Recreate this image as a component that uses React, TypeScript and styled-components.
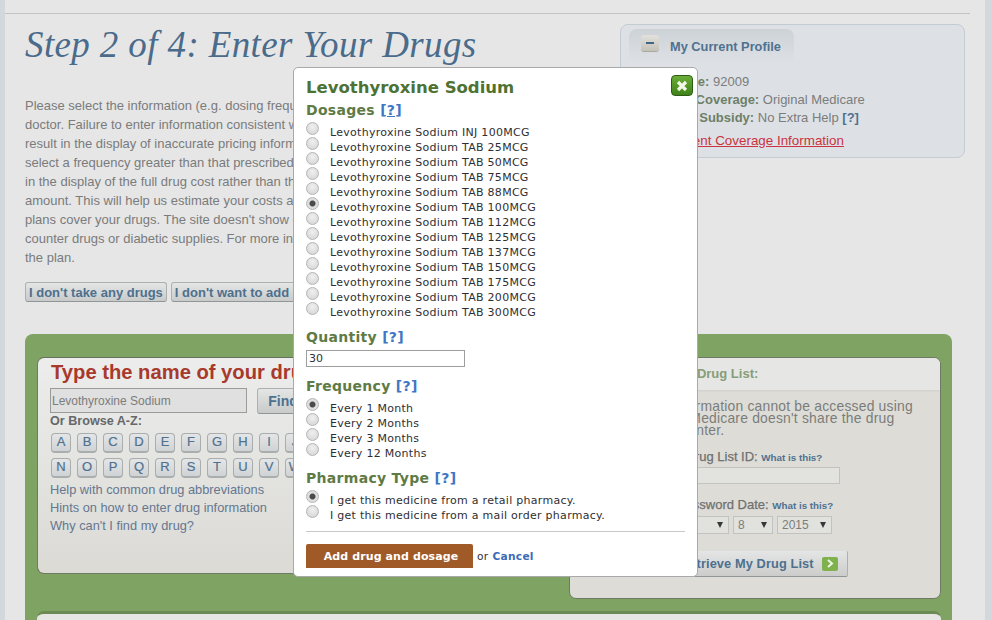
import React from 'react';
import styled, { createGlobalStyle } from 'styled-components';

const GlobalStyle = createGlobalStyle`
    html, body {
        margin: 0;
        padding: 0;
        height: 620px;
        overflow: hidden;
        background: #d3d8dd;
        font-family: "Liberation Sans", Arial, sans-serif;
    }
`;

const Page = styled.div`
    position: relative;
    width: 992px;
    height: 620px;
    overflow: hidden;
`;

const Sheet = styled.div`
    margin-left: 5px;
    width: 980px;
    height: 620px;
    background: #e6e6e7;
    overflow: hidden;
`;

const TopRule = styled.div`
    width: 965px;
    height: 13px;
    border-bottom: 1px solid #c2c3c3;
`;

const Intro = styled.div`
    display: flex;
    justify-content: space-between;
    padding: 10px 20px 0 20px;
    height: 310px;
`;

const IntroText = styled.div`
    width: 560px;
`;

const Title = styled.h1`
    margin: 0 0 30px;
    font: italic 400 37px/42px "Liberation Serif", Georgia, serif;
    color: #4a6b8a;
    letter-spacing: 0.38px;
`;

const Paragraph = styled.p`
    margin: 0 0 15px;
    width: 560px;
    height: 171px;
    font-size: 13px;
    line-height: 19px;
    color: #7a7b7b;
    white-space: nowrap;
`;

const ActionRow = styled.div`
    display: flex;
    gap: 4px;
`;

const GrayButton = styled.button`
    height: 20px;
    padding: 0 3px;
    border: 1px solid #adb0b1;
    border-bottom-color: #929596;
    border-radius: 3px;
    background: linear-gradient(#e4e5e5, #c9cbcb);
    color: #4d708e;
    font: 700 13px "Liberation Sans", Arial, sans-serif;
    white-space: nowrap;
`;

const ProfileBox = styled.aside`
    width: 345px;
    height: 134px;
    box-sizing: border-box;
    padding: 4px 8px;
    border: 1px solid #c3ccd3;
    border-radius: 8px;
    background: #dde1e5;
`;

const ProfileTab = styled.div`
    display: flex;
    align-items: center;
    gap: 11px;
    width: 165px;
    height: 34px;
    box-sizing: border-box;
    padding-left: 12px;
    border-radius: 8px 8px 0 0;
    background: linear-gradient(#cdd2d6, #dde1e5);
`;

const MinusButton = styled.span`
    display: flex;
    align-items: center;
    justify-content: center;
    width: 18px;
    height: 16px;
    margin-bottom: 6px;
    border-radius: 3px;
    background: linear-gradient(#e2e1dc, #c4c2b8);
    box-shadow: 0 1px 0 #aaa99f;

    &::before {
        content: '';
        width: 8px;
        height: 2px;
        background: #3f6484;
    }
`;

const ProfileTitle = styled.span`
    font-size: 12.8px;
    font-weight: 700;
    color: #4f7190;
`;

const ProfileLines = styled.div`
    padding: 10px 0 0 11px;
    font-size: 13px;
    line-height: 18px;
    color: #7b7c7c;
`;

const ProfileLabel = styled.b`
    color: #6e7f68;
`;

const HelpLink = styled.b`
    color: #4f7190;
`;

const CoverageLink = styled.a`
    display: block;
    margin-top: 5px;
    color: #c8343f;
    font-size: 13.4px;
    font-weight: 400;
    text-decoration: underline;
`;

const GreenPanel = styled.section`
    width: 927px;
    height: 300px;
    margin-left: 20px;
    box-sizing: border-box;
    padding: 23px 11px 0 12px;
    border-radius: 8px 8px 0 0;
    background: #7fa362;
    display: grid;
    grid-template-columns: 520px 372px;
    column-gap: 12px;
    align-items: start;
`;

const SearchCard = styled.div`
    height: 217px;
    box-sizing: border-box;
    padding: 2px 12px;
    border: 1px solid #6f7a66;
    border-top-color: #68715f;
    border-radius: 7px;
    background: linear-gradient(#ecedec, #dbdad5);
`;

const CardHeading = styled.h2`
    margin: 0 0 4px;
    padding-left: 1px;
    font-size: 20.2px;
    line-height: 24px;
    font-weight: 700;
    color: #a8392c;
`;

const SearchRow = styled.div`
    display: flex;
    align-items: flex-start;
    gap: 10px;
`;

const SearchInput = styled.input`
    width: 197px;
    height: 25px;
    box-sizing: border-box;
    padding: 0 1px;
    border: 1px solid #9a9b9b;
    background: #dfe0df;
    color: #7c7d7d;
    font: 12px "Liberation Sans", Arial, sans-serif;
`;

const FindButton = styled(GrayButton)`
    width: 52px;
    height: 26px;
    font-size: 14px;
`;

const BrowseLabel = styled.div`
    font-size: 12.6px;
    line-height: 15px;
    font-weight: 700;
    color: #66676a;
`;

const LetterRow = styled.div`
    display: flex;
    gap: 6px;
    margin: 4px 0 0 1px;
    & + & {
        margin-top: 5px;
    }
`;

const LetterKey = styled.span`
    display: flex;
    align-items: center;
    justify-content: center;
    width: 20px;
    height: 20px;
    box-sizing: border-box;
    padding-bottom: 2px;
    border: 1px solid #a9adae;
    border-bottom-width: 2px;
    border-radius: 4px;
    background: linear-gradient(#e4e5e6, #d0d3d5);
    color: #4f7190;
    font-size: 13px;
    -webkit-text-stroke: 0.2px #4f7190;
`;

const HelpLinks = styled.div`
    margin-top: 3px;
    font-size: 12.8px;
    line-height: 18px;
    color: #65778f;
`;

const RetrieveCard = styled.div`
    height: 242px;
    box-sizing: border-box;
    border: 1px solid #6f7a66;
    border-radius: 7px;
    background: #dddcd7;
    overflow: hidden;
`;

const RetrieveHeader = styled.div`
    height: 32px;
    padding-left: 72px;
    background: #e6e6e5;
    font-size: 13px;
    line-height: 32px;
    font-weight: 700;
    color: #869d78;
    box-shadow: 0 1px 2px #cfcec9;
`;

const RetrieveBody = styled.div`
    padding: 10px 0 0 15px;
`;

const Notice = styled.p`
    margin: 0 0 13px;
    font-size: 13.9px;
    line-height: 12px;
    letter-spacing: 0.2px;
    color: #7b7c7a;
    white-space: nowrap;
`;

const FieldLabel = styled.div<{ $indent: number }>`
    padding-left: ${(p) => p.$indent}px;
    font-size: 13px;
    line-height: 16px;
    color: #6f706f;
    -webkit-text-stroke: 0.25px #6f706f;
`;

const WhatIsThis = styled.b`
    font-size: 9.8px;
    color: #4f7190;
    -webkit-text-stroke: 0;
`;

const ListIdInput = styled.input`
    display: block;
    width: 200px;
    height: 17px;
    margin: 1px 0 13px 55px;
    box-sizing: border-box;
    border: 1px solid #c2c3c1;
    background: #e2e2df;
`;

const SelectRow = styled.div`
    display: flex;
    gap: 4px;
    margin: 2px 0 0 64px;
`;

const FakeSelect = styled.div<{ $width: number }>`
    display: flex;
    justify-content: space-between;
    align-items: center;
    width: ${(p) => p.$width}px;
    height: 18px;
    box-sizing: border-box;
    padding: 0 5px 0 4px;
    border: 1px solid #c2c3c1;
    background: #e1e1de;
    font-size: 12px;
    color: #7c7d7b;

    &::after {
        content: '';
        border-left: 3.5px solid transparent;
        border-right: 3.5px solid transparent;
        border-top: 6px solid #35383a;
    }
`;

const RetrieveButton = styled(GrayButton)`
    display: flex;
    align-items: center;
    gap: 8px;
    height: 26px;
    margin: 17px 0 0 71px;
    padding: 0 9px 0 24px;
    border-width: 0 1px 1px 0;
    border-radius: 2px;
    background: linear-gradient(#e4e5e5, #cccdcb);
    font-size: 12.8px;
    letter-spacing: 0.1px;
`;

const GoIcon = styled.span`
    display: flex;
    align-items: center;
    justify-content: center;
    width: 16px;
    height: 14px;
    border-radius: 2px;
    background: #7fb24c;
`;

const LowerCard = styled.div`
    grid-column: 1 / -1;
    height: 20px;
    margin-top: 12px;
    border-top: 3px solid #6b8a54;
    border-radius: 7px 7px 0 0;
    background: #e6e6e5;
`;

const Modal = styled.div`
    position: absolute;
    top: 67px;
    left: 293px;
    width: 405px;
    height: 510px;
    box-sizing: border-box;
    padding: 10px 12px 0 12px;
    border: 1px solid #a9a9a9;
    border-radius: 5px;
    background: #fff;
    font-family: "DejaVu Sans", Verdana, sans-serif;
`;

const CloseButton = styled.button`
    position: absolute;
    top: 7px;
    right: 4px;
    display: flex;
    align-items: center;
    justify-content: center;
    width: 22px;
    height: 21px;
    padding: 0;
    border: 1px solid #2f5c14;
    border-radius: 4px;
    background: linear-gradient(#6bad38, #3f8218);
`;

const ModalTitle = styled.h2`
    margin: 0;
    font-size: 16.5px;
    line-height: 20px;
    font-weight: 700;
    color: #4e7232;
`;

const SectionTitle = styled.h3<{ $gap?: number }>`
    margin: ${(p) => p.$gap ?? 0}px 0 0;
    font-size: 14px;
    line-height: 20px;
    font-weight: 700;
    letter-spacing: 0.3px;
    color: #5f7b45;
`;

const HelpMark = styled.a<{ $underline?: boolean }>`
    color: #3f76c4;
    text-decoration: ${(p) => (p.$underline ? 'underline' : 'none')};
`;

const RadioGroup = styled.div`
    margin-top: 4px;
`;

const RadioRow = styled.label`
    display: flex;
    height: 15px;
    font-size: 11px;
    line-height: 17px;
    letter-spacing: 0.28px;
    color: #2f2f33;
`;

const RadioInput = styled.input.attrs({ type: 'radio' })`
    appearance: none;
    flex: none;
    width: 13px;
    height: 13px;
    margin: -2px 11px 0 0;
    border: 1px solid #b5b5b5;
    border-radius: 50%;
    background: radial-gradient(circle at 50% 35%, #f0f0f0, #d2d2d2);

    &:checked {
        background: radial-gradient(circle, #4a4a4a 0 2.5px, #dedede 3.5px);
    }
`;

const QuantityInput = styled.input`
    display: block;
    width: 159px;
    height: 17px;
    box-sizing: border-box;
    margin-top: 3px;
    padding: 0 2px;
    border: 1px solid #9e9e9e;
    font: 11px "DejaVu Sans", Verdana, sans-serif;
    color: #2f2f33;
`;

const Divider = styled.hr`
    margin: 9px 0 12px;
    border: 0;
    border-top: 1px solid #c9c9c9;
`;

const ModalFooter = styled.div`
    display: flex;
    align-items: center;
    gap: 4px;
    font-size: 10.6px;
    letter-spacing: 0.3px;
    color: #2f2f33;
`;

const SubmitButton = styled.button`
    width: 167px;
    height: 24px;
    padding: 0 0 0 3px;
    border: 0;
    border-radius: 2px 2px 0 0;
    background: #a05a28;
    color: #fff;
    font: 700 11px "DejaVu Sans", Verdana, sans-serif;
    letter-spacing: 0.1px;
`;

const CancelLink = styled.a`
    color: #3a6cb8;
    font-weight: 700;
`;

const DOSAGES = [
    'INJ 100MCG',
    'TAB 25MCG',
    'TAB 50MCG',
    'TAB 75MCG',
    'TAB 88MCG',
    'TAB 100MCG',
    'TAB 112MCG',
    'TAB 125MCG',
    'TAB 137MCG',
    'TAB 150MCG',
    'TAB 175MCG',
    'TAB 200MCG',
    'TAB 300MCG',
];

const FREQUENCIES = ['Every 1 Month', 'Every 2 Months', 'Every 3 Months', 'Every 12 Months'];

const PHARMACIES = [
    'I get this medicine from a retail pharmacy.',
    'I get this medicine from a mail order pharmacy.',
];

const RadioList: React.FC<{ name: string; items: string[]; selected: number }> = ({
    name,
    items,
    selected,
}) => (
    <RadioGroup>
        {items.map((item, i) => (
            <RadioRow key={item}>
                <RadioInput name={name} defaultChecked={i === selected} />
                {item}
            </RadioRow>
        ))}
    </RadioGroup>
);

const App: React.FC = () => (
    <Page>
        <GlobalStyle />
        <Sheet>
            <TopRule />
            <Intro>
                <IntroText>
                    <Title>Step 2 of 4: Enter Your Drugs</Title>
                    <Paragraph>
                        Please select the information (e.g. dosing frequency) that was prescribed by your
                        <br />
                        doctor. Failure to enter information consistent with your prescription may
                        <br />
                        result in the display of inaccurate pricing information. If you
                        <br />
                        select a frequency greater than that prescribed, it may result
                        <br />
                        in the display of the full drug cost rather than the copay
                        <br />
                        amount. This will help us estimate your costs and see which
                        <br />
                        plans cover your drugs. The site doesn't show over the
                        <br />
                        counter drugs or diabetic supplies. For more information contact
                        <br />
                        the plan.
                    </Paragraph>
                    <ActionRow>
                        <GrayButton>I don't take any drugs</GrayButton>
                        <GrayButton>I don't want to add drugs</GrayButton>
                    </ActionRow>
                </IntroText>
                <ProfileBox>
                    <ProfileTab>
                        <MinusButton />
                        <ProfileTitle>My Current Profile</ProfileTitle>
                    </ProfileTab>
                    <ProfileLines>
                        <div>
                            <ProfileLabel>Area Code:</ProfileLabel> 92009
                        </div>
                        <div>
                            <ProfileLabel>My Drug Coverage:</ProfileLabel> Original Medicare
                        </div>
                        <div>
                            <ProfileLabel>Premium Subsidy:</ProfileLabel> No Extra Help <HelpLink>[?]</HelpLink>
                        </div>
                        <CoverageLink>Edit Current Coverage Information</CoverageLink>
                    </ProfileLines>
                </ProfileBox>
            </Intro>
            <GreenPanel>
                <SearchCard>
                    <CardHeading>Type the name of your drug</CardHeading>
                    <SearchRow>
                        <SearchInput defaultValue="Levothyroxine Sodium" />
                        <FindButton>Find</FindButton>
                    </SearchRow>
                    <BrowseLabel>Or Browse A-Z:</BrowseLabel>
                    <LetterRow>
                        {'ABCDEFGHIJKLM'.split('').map((l) => (
                            <LetterKey key={l}>{l}</LetterKey>
                        ))}
                    </LetterRow>
                    <LetterRow>
                        {'NOPQRSTUVWXYZ'.split('').map((l) => (
                            <LetterKey key={l}>{l}</LetterKey>
                        ))}
                    </LetterRow>
                    <HelpLinks>
                        <div>Help with common drug abbreviations</div>
                        <div>Hints on how to enter drug information</div>
                        <div>Why can't I find my drug?</div>
                    </HelpLinks>
                </SearchCard>
                <RetrieveCard>
                    <RetrieveHeader>Retrieve Drug List:</RetrieveHeader>
                    <RetrieveBody>
                        <Notice>
                            Your drug list information cannot be accessed using
                            <br />
                            online, because Medicare doesn't share the drug
                            <br />
                            lists with a call center.
                        </Notice>
                        <FieldLabel $indent={60}>
                            Saved Drug List ID: <WhatIsThis>What is this?</WhatIsThis>
                        </FieldLabel>
                        <ListIdInput />
                        <FieldLabel $indent={62}>
                            Your Password Date: <WhatIsThis>What is this?</WhatIsThis>
                        </FieldLabel>
                        <SelectRow>
                            <FakeSelect $width={80}>August</FakeSelect>
                            <FakeSelect $width={40}>8</FakeSelect>
                            <FakeSelect $width={55}>2015</FakeSelect>
                        </SelectRow>
                        <RetrieveButton>
                            Retrieve My Drug List
                            <GoIcon>
                                <svg width="8" height="9" viewBox="0 0 8 9">
                                    <path d="M2 1l4 3.5L2 8" fill="none" stroke="#eef5e2" strokeWidth="2" />
                                </svg>
                            </GoIcon>
                        </RetrieveButton>
                    </RetrieveBody>
                </RetrieveCard>
                <LowerCard />
            </GreenPanel>
        </Sheet>
        <Modal>
            <CloseButton aria-label="Close">
                <svg width="12" height="12" viewBox="0 0 12 12">
                    <path d="M2 2l8 8M10 2l-8 8" stroke="#f2f7ea" strokeWidth="3.2" />
                </svg>
            </CloseButton>
            <ModalTitle>Levothyroxine Sodium</ModalTitle>
            <SectionTitle $gap={2}>
                Dosages <HelpMark $underline>[?]</HelpMark>
            </SectionTitle>
            <RadioList
                name="dosage"
                items={DOSAGES.map((d) => `Levothyroxine Sodium ${d}`)}
                selected={5}
            />
            <SectionTitle $gap={8}>
                Quantity <HelpMark>[?]</HelpMark>
            </SectionTitle>
            <QuantityInput defaultValue="30" />
            <SectionTitle $gap={9}>
                Frequency <HelpMark>[?]</HelpMark>
            </SectionTitle>
            <RadioList name="frequency" items={FREQUENCIES} selected={0} />
            <SectionTitle $gap={8}>
                Pharmacy Type <HelpMark>[?]</HelpMark>
            </SectionTitle>
            <RadioList name="pharmacy" items={PHARMACIES} selected={0} />
            <Divider />
            <ModalFooter>
                <SubmitButton>Add drug and dosage</SubmitButton>
                or <CancelLink>Cancel</CancelLink>
            </ModalFooter>
        </Modal>
    </Page>
);

export default App;
